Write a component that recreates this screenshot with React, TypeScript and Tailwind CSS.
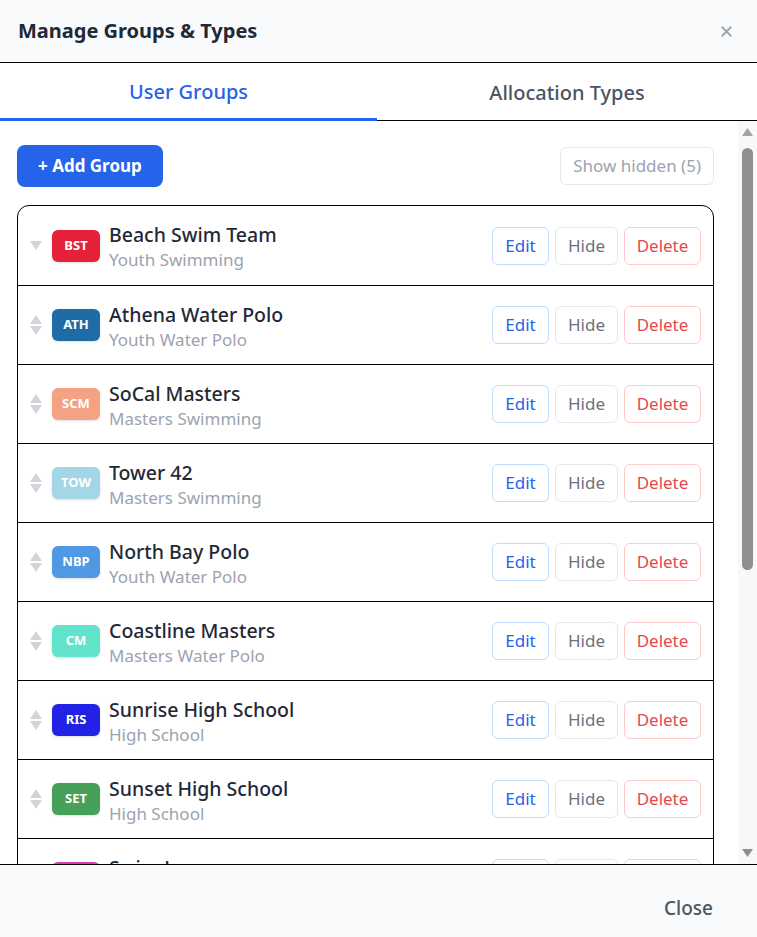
import { X } from "lucide-react"

type Group = { code: string; name: string; type: string; color: string }

const groups: Group[] = [
  { code: "BST", name: "Beach Swim Team", type: "Youth Swimming", color: "bg-[#e5213a]" },
  { code: "ATH", name: "Athena Water Polo", type: "Youth Water Polo", color: "bg-[#1f6ba6]" },
  { code: "SCM", name: "SoCal Masters", type: "Masters Swimming", color: "bg-[#f4a283]" },
  { code: "TOW", name: "Tower 42", type: "Masters Swimming", color: "bg-[#a3d6e6]" },
  { code: "NBP", name: "North Bay Polo", type: "Youth Water Polo", color: "bg-[#4f98e3]" },
  { code: "CM", name: "Coastline Masters", type: "Masters Water Polo", color: "bg-[#62e3cb]" },
  { code: "RIS", name: "Sunrise High School", type: "High School", color: "bg-[#2222e6]" },
  { code: "SET", name: "Sunset High School", type: "High School", color: "bg-[#47a05a]" },
  { code: "SL", name: "Swim Lessons", type: "Lessons", color: "bg-[#d63cb8]" },
]

function Handle({ first }: { first: boolean }) {
  return (
    <div className="flex flex-col items-center w-[14px] gap-[2px]">
      {!first && (
        <svg width="12" height="9" viewBox="0 0 12 9"><path d="M6 0 L12 9 L0 9 Z" fill="#d1d5db" /></svg>
      )}
      <svg width="12" height="9" viewBox="0 0 12 9"><path d="M0 0 L12 0 L6 9 Z" fill="#d1d5db" /></svg>
    </div>
  )
}

function Row({ g, first }: { g: Group; first: boolean }) {
  return (
    <div className={`flex items-center h-[79px] shrink-0 pl-[11px] pr-[12px] ${first ? "" : "border-t border-black"}`}>
      <Handle first={first} />
      <div className={`ml-[9px] w-[48px] h-[32px] rounded-md ${g.color} flex items-center justify-center text-white text-[13px] font-bold shadow-sm`}>
        {g.code}
      </div>
      <div className="ml-[9px] flex-1 flex flex-col gap-[2px] mt-[2px]">
        <span className="text-[19.5px] leading-[25px] font-medium text-[#1f2937]">{g.name}</span>
        <span className="text-[17px] leading-[22px] text-[#9ca3af]">{g.type}</span>
      </div>
      <div className="flex gap-[6px]">
        <button className="h-[38px] w-[57px] rounded-md border border-[#bfdbfe] text-[#2563eb] text-[17px]">Edit</button>
        <button className="h-[38px] w-[63px] rounded-md border border-[#e5e7eb] text-[#6b7280] text-[17px]">Hide</button>
        <button className="h-[38px] w-[77px] rounded-md border border-[#fecaca] text-[#e5484d] text-[17px]">Delete</button>
      </div>
    </div>
  )
}

function ScrollTrack() {
  return (
    <div className="w-[19px] shrink-0 bg-[#f8f8f8] flex flex-col items-center pt-[7px] pb-[7px]">
      <svg width="11" height="8" viewBox="0 0 11 8"><path d="M5.5 0 L11 8 L0 8 Z" fill="#a3a3a3" /></svg>
      <div className="mt-[12px] h-[422px] w-[11px] rounded-full bg-[#8f8f8f]" />
      <div className="flex-1" />
      <svg width="11" height="8" viewBox="0 0 11 8"><path d="M0 0 L11 0 L5.5 8 Z" fill="#8f8f8f" /></svg>
    </div>
  )
}

export default function App() {
  return (
    <div className="h-screen flex flex-col bg-white text-black" style={{ fontFamily: "'Noto Sans', sans-serif" }}>
      <div className="h-[63px] shrink-0 bg-[#f9fafb] border-b border-black flex items-center justify-between pl-[18px] pr-[22px]">
        <h1 className="text-[20px] font-bold text-[#1f2937]">Manage Groups &amp; Types</h1>
        <X size={17} strokeWidth={2.5} className="text-[#9ca3af]" />
      </div>
      <div className="h-[58px] shrink-0 flex border-b border-black">
        <div className="w-[377px] flex items-center justify-center text-[20px] font-medium text-[#2563eb] border-b-[3px] border-[#2563eb] -mb-px pt-[2px]">
          User Groups
        </div>
        <div className="flex-1 flex items-center justify-center text-[20px] font-medium text-[#4b5563] pt-[2px]">
          Allocation Types
        </div>
      </div>
      <div className="flex-1 min-h-0 flex">
        <div className="flex-1 overflow-hidden pl-[17px] pr-[24px] pt-[24px] flex flex-col">
          <div className="flex items-center justify-between shrink-0">
            <button className="h-[42px] px-[21px] rounded-lg bg-[#2563eb] text-white text-[17px] font-bold">+ Add Group</button>
            <button className="h-[38px] px-[12px] rounded-md border border-[#e5e7eb] text-[#9ca3af] text-[17px]">Show hidden (5)</button>
          </div>
          <div className="mt-[18px] border border-black rounded-t-xl flex flex-col shrink-0">
            {groups.map((g, i) => (
              <Row key={g.code} g={g} first={i === 0} />
            ))}
          </div>
        </div>
        <ScrollTrack />
      </div>
      <div className="h-[73px] shrink-0 bg-[#f9fafb] border-t border-black flex items-center justify-end pr-[44px]">
        <button className="text-[19px] font-medium text-[#4b5563] pt-[15px]">Close</button>
      </div>
    </div>
  )
}
